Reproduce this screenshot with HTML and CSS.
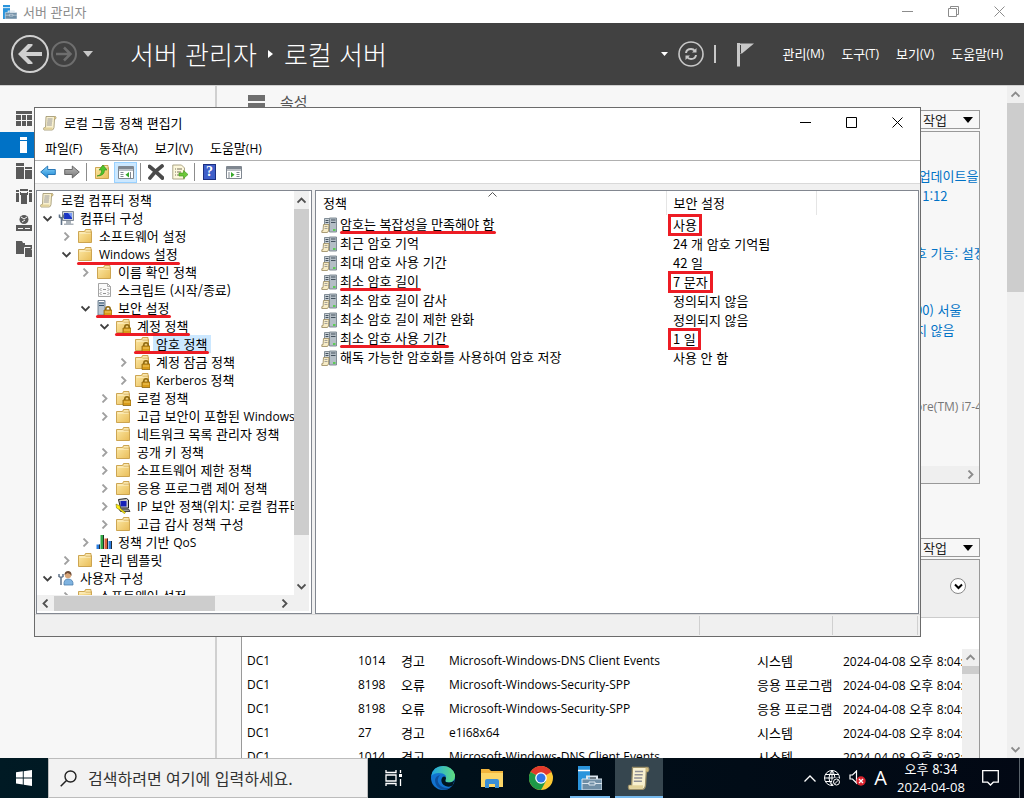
FILE: index.html
```
<!DOCTYPE html>
<html lang="ko">
<head>
    <meta charset="UTF-8">
    <meta name="viewport" content="width=device-width, initial-scale=1.0">
    <title>서버 관리자</title>
    <link rel="stylesheet" href="styles.css">
</head>
<body>
    <!-- Shared icons -->
    <svg class="sprite" aria-hidden="true">
        <defs>
            <linearGradient id="gFolder" x1="0" y1="0" x2="1" y2="1"><stop offset="0" stop-color="#fdeaa8"/><stop offset="1" stop-color="#e9bd58"/></linearGradient>
            <linearGradient id="gBlue" x1="0" y1="0" x2="0" y2="1"><stop offset="0" stop-color="#8fd6fb"/><stop offset="1" stop-color="#1583d2"/></linearGradient>
            <linearGradient id="gGrey" x1="0" y1="0" x2="0" y2="1"><stop offset="0" stop-color="#bbb"/><stop offset="1" stop-color="#777"/></linearGradient>
            <linearGradient id="gEdge" x1="0" y1="0" x2="1" y2="0"><stop offset="0" stop-color="#1fa5e4"/><stop offset="1" stop-color="#5fdc7e"/></linearGradient>
            <symbol id="chev-right" viewBox="0 0 9 9"><path d="M2.5 0.5l4 4-4 4" fill="none" stroke="currentColor" stroke-width="1.8"/></symbol>
            <symbol id="chev-left" viewBox="0 0 9 9"><path d="M6.5 0.5l-4 4 4 4" fill="none" stroke="currentColor" stroke-width="1.8"/></symbol>
            <symbol id="chev-down" viewBox="0 0 9 9"><path d="M0.5 2.5l4 4 4-4" fill="none" stroke="currentColor" stroke-width="1.8"/></symbol>
            <symbol id="chev-up" viewBox="0 0 9 9"><path d="M0.5 6.5l4-4 4 4" fill="none" stroke="currentColor" stroke-width="1.8"/></symbol>
            <symbol id="scroll" viewBox="0 0 16 16">
                <path d="M4 1.5h9.500q1 1 0 2.500h-1l-.5 8.500H12q-.5 2.500-2 2.500H2Q1 13.500 2 12.500H3.500z" fill="#f8f0cf" stroke="#9b8f68" stroke-width=".8"/>
                <path d="M12 1.500q2.500 0 1.500 2.500h-1.500z" fill="#cdb97d"/><path d="M2 12.500h8.500v2H2z" fill="#e2d29a"/>
                <path d="M5.500 4h5M5.300 6h5M5 8h5M4.800 10h5" stroke="#8f8f96" stroke-width=".9"/>
            </symbol>
            <symbol id="folder" viewBox="0 0 16 16">
                <path d="M1.500 3.500h6l1-2h5.500v2h.5v11h-13z" fill="url(#gFolder)" stroke="#c79d45" stroke-width=".9"/>
                <path d="M9 3h4.500M2.500 5h11" stroke="#fff8dc" stroke-width=".9"/><path d="M8.500 4.200h5.500" stroke="#c79d45" stroke-width=".6"/>
            </symbol>
            <symbol id="lock" viewBox="0 0 16 16">
                <path d="M9.800 11V9q0-2.300 2.200-2.300t2.200 2.300v2" fill="none" stroke="#8f6a12" stroke-width="1.600"/>
                <path d="M8 10h8v5.500H8z" fill="#d99c1a" stroke="#8a6410" stroke-width=".8"/><path d="M9 12h6" stroke="#f7d978" stroke-width=".8"/>
            </symbol>
            <symbol id="folder-lock" viewBox="0 0 16 16"><use href="#folder"/><use href="#lock"/></symbol>
            <symbol id="server-lock" viewBox="0 0 16 16">
                <path d="M2 .5h7v14.500H2z" fill="#b9c6d2" stroke="#68798a" stroke-width=".9"/><path d="M3 3h5M3 5.500h5" stroke="#33526e"/><path d="M3 1.500h5" stroke="#fff"/>
                <use href="#lock"/>
            </symbol>
            <symbol id="computer" viewBox="0 0 16 16">
                <path d="M4.500 1.500h11v9h-11z" fill="#cdd3da" stroke="#76808b" stroke-width=".9"/><path d="M6 3h8v6H6z" fill="#1a35c5"/><path d="M10 3h4v5z" fill="#7b9cf5"/>
                <path d="M8 11h5v2.500h2.500v1.500H6v-1.500h2z" fill="#aab2ba"/>
                <path d="M1.500 4.500v2.500q2 1.500 4 0V4.500M3.500 7.500V15" fill="none" stroke="#5f7288" stroke-width="1.600"/>
            </symbol>
            <symbol id="user" viewBox="0 0 16 16">
                <path d="M6 15q-.5-6 4-6 5.500 0 5 6z" fill="#7fb3e0" stroke="#4a7dae" stroke-width=".8"/><circle cx="10" cy="5" r="3.200" fill="#d9a679"/>
                <path d="M6.500 5q0-4 4-4 3.500.5 3 5-1-2.500-4-3z" fill="#6b4a35"/>
                <path d="M1 4v2.500q2 1.500 4 0V4M3 7v8" fill="none" stroke="#5f7288" stroke-width="1.500"/>
            </symbol>
            <symbol id="script" viewBox="0 0 16 16">
                <path d="M2.500 1.500h9l3 3v10h-12z" fill="#fafafa" stroke="#9a9a9a" stroke-width=".9"/><path d="M11.500 1.500v3h3" fill="none" stroke="#9a9a9a" stroke-width=".8"/>
                <path d="M5.500 6L4 7.500 5.500 9M7 7.500h3M11.500 6L13 7.500 11.500 9M5.500 10L4 11.500 5.500 13M7 11.500h3M11.500 10l1.500 1.500-1.500 1.500" fill="none" stroke="#777" stroke-width=".8"/>
            </symbol>
            <symbol id="ipsec" viewBox="0 0 16 16">
                <path d="M3.500 1.500l8-1 2 1.500v8h-8z" fill="#c9c9c9" stroke="#222"/><path d="M5.500 3h6v5.500h-6z" fill="#1420b8"/>
                <path d="M4 11h9.500l1.500 2.500H5.500z" fill="#9a9a9a" stroke="#222" stroke-width=".8"/>
                <path d="M1 6l4 2 .5 2.500 5 4-1 1.200-5-4L1.500 10z" fill="#ffee10" stroke="#6f6600" stroke-width=".5"/>
            </symbol>
            <symbol id="bars" viewBox="0 0 16 16">
                <path d="M.5 10.500h3.500V15H.5z" fill="#2a7de0"/><path d="M4.500 1H8v14H4.500z" fill="#2fa844"/><path d="M8.500 4.500H12V15H8.500z" fill="#e0603a"/><path d="M12.500 7H16v8h-3.500z" fill="#2a7de0"/>
                <path d="M3.500 10.500V15M7.500 1v14M11.500 4.500V15M15.500 7v8" stroke="#222" stroke-width=".9"/>
            </symbol>
            <symbol id="policy" viewBox="0 0 16 16">
                <path d="M8.500 1h7v14h-7z" fill="#b4bec6" stroke="#77838d" stroke-width=".9"/><path d="M3.500 1.500h5v10h-5z" fill="#c9d1d7" stroke="#77838d" stroke-width=".9"/>
                <path d="M4.500 3.500h3M4.500 5.500h3M10 3h4.500M10 5.500h4.500" stroke="#44525e"/>
                <path d="M2.500 7.500h5.500l-.5 6.500q-.5 1.500-1.500 1.500H.8v-1.800h1.200z" fill="#f7ecc6" stroke="#97865b" stroke-width=".8"/><path d="M3.500 9.500h3M3.500 11.500h3" stroke="#8f8f8f" stroke-width=".8"/>
                <path d="M12 13h2.500" stroke="#3ed030" stroke-width="1.500"/>
            </symbol>
            <symbol id="toolbox-server" viewBox="0 0 24 24">
                <path d="M0 0h12v24H0z" fill="#2a94dc"/><path d="M0 4.500h12" stroke="#fff" stroke-width="1.500"/>
                <path d="M4 13h20v11H4z" fill="#6f8ea5" stroke="#dce6ee"/><path d="M9 13v-2.500h10V13" fill="none" stroke="#dce6ee" stroke-width="2"/><path d="M4 17.500h7M17 17.500h7M11 16v3h6v-3z" fill="#6f8ea5" stroke="#dce6ee"/>
            </symbol>
        </defs>
    </svg>

    <main class="server-manager">
        <header class="app-title">
            <svg class="icon" viewBox="0 0 24 24"><use href="#toolbox-server"/></svg>
            <span>서버 관리자</span>
            <div class="window-buttons muted">
                <button aria-label="최소화"><svg viewBox="0 0 11 11"><path d="M0 5.500h11"/></svg></button>
                <button aria-label="이전 크기로"><svg viewBox="0 0 11 11"><path d="M.5 2.500h8v8h-8zM2.500 2.500v-2h8v8h-2"/></svg></button>
                <button aria-label="닫기"><svg viewBox="0 0 11 11"><path d="M.5.5l10 10M10.500.5l-10 10"/></svg></button>
            </div>
        </header>

        <nav class="banner">
            <button class="nav-back" aria-label="뒤로"><svg width="38" height="38" viewBox="0 0 38 38"><circle cx="19" cy="19" r="18" fill="none" stroke="#d0d0d0" stroke-width="2"/><path d="M31 17v4H15l6.500 6.500V29h-4.500L7 19 17 9h4.500v1.500L15 17z" fill="#d0d0d0"/></svg></button>
            <button class="nav-forward" aria-label="앞으로"><svg width="26" height="26" viewBox="0 0 26 26"><circle cx="13" cy="13" r="12" fill="none" stroke="#6e6e6e" stroke-width="2"/><path d="M5 13h15M13 6.500l6.500 6.500-6.500 6.500" fill="none" stroke="#6e6e6e" stroke-width="2.500"/></svg></button>
            <svg class="nav-caret" width="10" height="6" viewBox="0 0 10 6"><path d="M0 0h10L5 6z" fill="#c8c8c8"/></svg>
            <h1>서버 관리자 <svg width="5" height="8" viewBox="0 0 5 8"><path d="M0 0l5 4-5 4z" fill="#fff"/></svg> 로컬 서버</h1>
            <div class="banner-tools">
                <svg width="7" height="4" viewBox="0 0 7 4"><path d="M0 0h7L3.500 4z" fill="#fff"/></svg>
                <button aria-label="새로 고침"><svg width="26" height="26" viewBox="0 0 26 26"><circle cx="13" cy="13" r="12" fill="none" stroke="#c8c8c8" stroke-width="1.600"/><path d="M8 12q.5-4 5-4 2.500 0 4 2M18 14q-.5 4-5 4-2.500 0-4-2" fill="none" stroke="#c8c8c8" stroke-width="2"/><path d="M18.500 7v4.500H14zM7.500 19v-4.500H12z" fill="#c8c8c8"/></svg></button>
                <span class="divider"></span>
                <button aria-label="알림"><svg width="18" height="25" viewBox="0 0 18 25"><path d="M1 1h3v23.500H1zM4 1.500h14L6 11.500H4z" fill="#c8c8c8"/><path d="M4.500 3v8" stroke="#414141"/></svg></button>
            </div>
            <div class="banner-menu">
                <button>관리<span class="latin">(M)</span></button>
                <button>도구<span class="latin">(T)</span></button>
                <button>보기<span class="latin">(V)</span></button>
                <button>도움말<span class="latin">(H)</span></button>
            </div>
        </nav>

        <div class="workspace">
            <aside class="sidebar">
                <a href="#" aria-label="대시보드"><svg class="icon" viewBox="0 0 16 16"><path d="M0 0h16v3H0zM0 4h5v5H0zM6 4h4v5H6zM11 4h5v5h-5zM0 10h5v5H0zM6 10h4v5H6zM11 10h5v5h-5z"/></svg></a>
                <a href="#" class="selected" aria-label="로컬 서버"><svg class="icon" viewBox="0 0 16 16"><path d="M4 0h7v3H4zM4 4h7v12H4z"/></svg></a>
                <a href="#" aria-label="모든 서버"><svg class="icon" viewBox="0 0 16 16"><path d="M0 0h8v3H0zM0 4h8v12H0zM9 4h7v2H9zM9 7h7v9H9z"/></svg></a>
                <a href="#" aria-label="서버 그룹"><svg class="icon" viewBox="0 0 16 16"><path d="M0 1h3v2H0zM0 4h3v9H0zM13 1h3v2h-3zM13 4h3v9h-3zM4 0h8v2H4zM5 4h6v11H5zM4 3h1v3H4zM11 3h1v3h-1z"/></svg></a>
                <a href="#" aria-label="파일 및 저장소"><svg class="icon" viewBox="0 0 16 16"><circle cx="8" cy="4.500" r="4.500"/><path d="M0 10h16v6H0z"/><path d="M2 13.500h5M9 13.500h5M5 2l3 2 3-2M6 7l3-2" stroke="#f7f7f7" fill="none"/></svg></a>
                <a href="#" aria-label="공유 폴더"><svg class="icon" viewBox="0 0 16 16"><path d="M0 0h6l1 2h2v11H0zM9 4h7v4H9zM9 7h5l2 2v7H9z"/><path d="M8.500 16V6.500h6" stroke="#f7f7f7" fill="none"/></svg></a>
            </aside>

            <div class="content">
                <section class="tile">
                    <h2><svg width="17" height="14" viewBox="0 0 17 14"><path d="M0 0h17v6H0zM0 8h17v6H0z" fill="#6e6e6e"/></svg>속성</h2>
                    <div class="tile-tools"><button class="tasks">작업 <svg width="10" height="6" viewBox="0 0 10 6"><path d="M0 0h10L5 6z"/></svg></button></div>
                    <div class="properties">
                        <div class="values">
                            <p><a href="#"> 업데이트을 </a><a href="#">  1:12</a></p>
                            <p><a href="#">호 기능: 설정</a></p>
                            <p><a href="#">00) 서울</a><a href="#">지 않음</a></p>
                            <p class="plain latin">ore(TM) i7-4790</p>
                        </div>
                        <div class="strip"><svg class="arrow" viewBox="0 0 9 9"><use href="#chev-right"/></svg></div>
                    </div>
                </section>

                <section class="tile events-tile">
                    <div class="tile-tools"><button class="tasks">작업 <svg width="10" height="6" viewBox="0 0 10 6"><path d="M0 0h10L5 6z"/></svg></button></div>
                    <div class="events">
                        <div class="filter"><button aria-label="확장"><svg class="arrow" viewBox="0 0 9 9"><path d="M1 2.500l3.500 3.500 3.500-3.500" fill="none" stroke="#000" stroke-width="2"/></svg></button></div>
                        <div class="events-body">
                            <div class="events-clip">
                                <table>
                                    <colgroup><col class="c-server"><col class="c-id"><col class="c-level"><col><col class="c-log"><col class="c-date"></colgroup>
                                    <tr><td class="latin">DC1</td><td class="latin">1014</td><td>경고</td><td class="latin">Microsoft-Windows-DNS Client Events</td><td>시스템</td><td><span class="latin">2024-04-08</span> 오후 <span class="latin">8:04:15</span></td></tr>
                                    <tr><td class="latin">DC1</td><td class="latin">8198</td><td>오류</td><td class="latin">Microsoft-Windows-Security-SPP</td><td>응용 프로그램</td><td><span class="latin">2024-04-08</span> 오후 <span class="latin">8:04:12</span></td></tr>
                                    <tr><td class="latin">DC1</td><td class="latin">8198</td><td>오류</td><td class="latin">Microsoft-Windows-Security-SPP</td><td>응용 프로그램</td><td><span class="latin">2024-04-08</span> 오후 <span class="latin">8:04:12</span></td></tr>
                                    <tr><td class="latin">DC1</td><td class="latin">27</td><td>경고</td><td class="latin">e1i68x64</td><td>시스템</td><td><span class="latin">2024-04-08</span> 오후 <span class="latin">8:04:02</span></td></tr>
                                    <tr><td class="latin">DC1</td><td class="latin">1014</td><td>경고</td><td class="latin">Microsoft-Windows-DNS Client Events</td><td>시스템</td><td><span class="latin">2024-04-08</span> 오후 <span class="latin">8:03:41</span></td></tr>
                                </table>
                            </div>
                            <div class="events-scroll"><svg class="arrow" viewBox="0 0 9 9"><use href="#chev-up"/></svg><div class="thumb"></div></div>
                        </div>
                    </div>
                </section>
            </div>

            <div class="page-scroll">
                <svg class="arrow" viewBox="0 0 9 9"><use href="#chev-up"/></svg>
                <div class="thumb"></div>
                <svg class="arrow" viewBox="0 0 9 9"><use href="#chev-down"/></svg>
            </div>
        </div>
    </main>

    <!-- Group policy editor window -->
    <div class="dialog" role="dialog" aria-label="로컬 그룹 정책 편집기">
        <header class="dialog-title">
            <svg class="icon" viewBox="0 0 16 16"><use href="#scroll"/></svg>
            <span>로컬 그룹 정책 편집기</span>
            <div class="window-buttons">
                <button aria-label="최소화"><svg viewBox="0 0 11 11"><path d="M0 5.500h11"/></svg></button>
                <button aria-label="최대화"><svg viewBox="0 0 11 11"><path d="M.5.5h10v10H.5z"/></svg></button>
                <button aria-label="닫기"><svg viewBox="0 0 11 11"><path d="M.5.5l10 10M10.500.5l-10 10"/></svg></button>
            </div>
        </header>
        <div class="menubar">
            <button>파일<span class="latin">(F)</span></button>
            <button>동작<span class="latin">(A)</span></button>
            <button>보기<span class="latin">(V)</span></button>
            <button>도움말<span class="latin">(H)</span></button>
        </div>
        <div class="toolbar">
            <button aria-label="뒤로"><svg class="icon" viewBox="0 0 16 16"><path d="M.7 8l7-6v3.500h7.600v5H7.700V14z" fill="url(#gBlue)" stroke="#1a6db0" stroke-width=".9"/></svg></button>
            <button aria-label="앞으로"><svg class="icon" viewBox="0 0 16 16"><path d="M15.300 8l-7-6v3.500H.7v5h7.600V14z" fill="url(#gGrey)" stroke="#5c5c5c" stroke-width=".9"/></svg></button>
            <span class="sep"></span>
            <button aria-label="위로"><svg class="icon" viewBox="0 0 16 16"><use href="#folder"/><path d="M3 12q5-1 4.500-6H5l4-5 4 5h-2.500q0 6-7.500 6z" fill="#4fc32c" stroke="#2e8a14" stroke-width=".6"/></svg></button>
            <button class="on" aria-label="콘솔 트리 표시"><svg class="icon" viewBox="0 0 16 16"><path d="M.5 2.500h15v12H.5z" fill="#fff" stroke="#7f8790"/><path d="M1 3h14v2.500H1z" fill="#7f8790"/><path d="M1 6.500h14" stroke="#b9bec4"/><path d="M2.500 8.500h3M2.500 10.500h3M2.500 12.500h3M12.500 8v6" stroke="#7f8790"/><path d="M11 8v5.500L7.500 10.800z" fill="#36a82a"/></svg></button>
            <span class="sep"></span>
            <button aria-label="삭제"><svg class="icon" viewBox="0 0 16 16"><path d="M1.500 2.500Q6 6 14.500 14M14 2Q7 7 2 14" fill="none" stroke="#4a4a4a" stroke-width="3.800" stroke-linecap="round"/></svg></button>
            <button aria-label="목록 내보내기"><svg class="icon" viewBox="0 0 16 16"><path d="M.8 1h8.700l3 3v11H.8z" fill="#fdf8dc" stroke="#a39c7c" stroke-width=".9"/><path d="M3 5h1M5 5h5M3 8h1M5 8h4M3 11h1M5 11h3" stroke="#77705a"/><path d="M7 9h4.500V6.500L16 10.500l-4.500 4V12H7z" fill="#6cc83a" stroke="#3c9117" stroke-width=".6"/></svg></button>
            <span class="sep"></span>
            <button class="help" aria-label="도움말"><span>?</span></button>
            <button aria-label="작업 창 표시"><svg class="icon" viewBox="0 0 16 16"><path d="M.5 2.500h15v12H.5z" fill="#fff" stroke="#7f8790"/><path d="M1 3h14v2.500H1z" fill="#7f8790"/><path d="M1 6.500h14" stroke="#b9bec4"/><path d="M10.500 8.500h3M10.500 10.500h3M10.500 12.500h3M3 8v6" stroke="#7f8790"/><path d="M5 8v5.500L8.500 10.800z" fill="#36a82a"/></svg></button>
        </div>

        <div class="panes">
            <div class="tree-pane">
                <div class="tree">
                    <div class="node root"><svg class="icon"><use href="#scroll"/></svg>로컬 컴퓨터 정책</div>
                    <ul>
                        <li><div class="node"><svg class="twist open"><use href="#chev-down"/></svg><svg class="icon"><use href="#computer"/></svg>컴퓨터 구성</div>
                            <ul>
                                <li><div class="node"><svg class="twist"><use href="#chev-right"/></svg><svg class="icon"><use href="#folder"/></svg>소프트웨어 설정</div></li>
                                <li><div class="node"><svg class="twist open"><use href="#chev-down"/></svg><svg class="icon"><use href="#folder"/></svg><span class="marked"><span class="latin">Windows</span> 설정</span></div>
                                    <ul>
                                        <li><div class="node"><svg class="twist"><use href="#chev-right"/></svg><svg class="icon"><use href="#folder"/></svg>이름 확인 정책</div></li>
                                        <li><div class="node"><span class="twist"></span><svg class="icon"><use href="#script"/></svg>스크립트 (시작/종료)</div></li>
                                        <li><div class="node"><svg class="twist open"><use href="#chev-down"/></svg><svg class="icon"><use href="#server-lock"/></svg><span class="marked">보안 설정</span></div>
                                            <ul>
                                                <li><div class="node"><svg class="twist open"><use href="#chev-down"/></svg><svg class="icon"><use href="#folder-lock"/></svg><span class="marked">계정 정책</span></div>
                                                    <ul>
                                                        <li><div class="node"><span class="twist"></span><svg class="icon"><use href="#folder-lock"/></svg><span class="marked current">암호 정책</span></div></li>
                                                        <li><div class="node"><svg class="twist"><use href="#chev-right"/></svg><svg class="icon"><use href="#folder-lock"/></svg>계정 잠금 정책</div></li>
                                                        <li><div class="node"><svg class="twist"><use href="#chev-right"/></svg><svg class="icon"><use href="#folder-lock"/></svg><span><span class="latin">Kerberos</span> 정책</span></div></li>
                                                    </ul>
                                                </li>
                                                <li><div class="node"><svg class="twist"><use href="#chev-right"/></svg><svg class="icon"><use href="#folder-lock"/></svg>로컬 정책</div></li>
                                                <li><div class="node"><svg class="twist"><use href="#chev-right"/></svg><svg class="icon"><use href="#folder"/></svg><span>고급 보안이 포함된 <span class="latin">Windows Defender</span> 방화벽</span></div></li>
                                                <li><div class="node"><span class="twist"></span><svg class="icon"><use href="#folder"/></svg>네트워크 목록 관리자 정책</div></li>
                                                <li><div class="node"><svg class="twist"><use href="#chev-right"/></svg><svg class="icon"><use href="#folder"/></svg>공개 키 정책</div></li>
                                                <li><div class="node"><svg class="twist"><use href="#chev-right"/></svg><svg class="icon"><use href="#folder"/></svg>소프트웨어 제한 정책</div></li>
                                                <li><div class="node"><svg class="twist"><use href="#chev-right"/></svg><svg class="icon"><use href="#folder"/></svg>응용 프로그램 제어 정책</div></li>
                                                <li><div class="node"><svg class="twist"><use href="#chev-right"/></svg><svg class="icon"><use href="#ipsec"/></svg><span><span class="latin">IP</span> 보안 정책(위치: 로컬 컴퓨터)</span></div></li>
                                                <li><div class="node"><svg class="twist"><use href="#chev-right"/></svg><svg class="icon"><use href="#folder"/></svg>고급 감사 정책 구성</div></li>
                                            </ul>
                                        </li>
                                        <li><div class="node"><svg class="twist"><use href="#chev-right"/></svg><svg class="icon"><use href="#bars"/></svg><span>정책 기반 <span class="latin">QoS</span></span></div></li>
                                    </ul>
                                </li>
                                <li><div class="node"><svg class="twist"><use href="#chev-right"/></svg><svg class="icon"><use href="#folder"/></svg>관리 템플릿</div></li>
                            </ul>
                        </li>
                        <li><div class="node"><svg class="twist open"><use href="#chev-down"/></svg><svg class="icon"><use href="#user"/></svg>사용자 구성</div>
                            <ul>
                                <li><div class="node"><svg class="twist"><use href="#chev-right"/></svg><svg class="icon"><use href="#folder"/></svg>소프트웨어 설정</div></li>
                            </ul>
                        </li>
                    </ul>
                </div>
                <div class="vbar"><svg class="arrow"><use href="#chev-up"/></svg><div class="thumb"></div><svg class="arrow"><use href="#chev-down"/></svg></div>
                <div class="hbar"><svg class="arrow"><use href="#chev-left"/></svg><div class="thumb"></div><svg class="arrow"><use href="#chev-right"/></svg></div>
            </div>

            <div class="list-pane">
                <svg class="sort" viewBox="0 0 9 5"><path d="M.5 4.500l4-4 4 4" fill="none" stroke="#555"/></svg>
                <table class="policies">
                    <thead><tr><th>정책</th><th>보안 설정</th><th></th></tr></thead>
                    <tbody>
                        <tr><td><svg class="icon"><use href="#policy"/></svg><span class="marked">암호는 복잡성을 만족해야 함</span></td><td><span class="boxed">사용</span></td></tr>
                        <tr><td><svg class="icon"><use href="#policy"/></svg>최근 암호 기억</td><td>24 개 암호 기억됨</td></tr>
                        <tr><td><svg class="icon"><use href="#policy"/></svg>최대 암호 사용 기간</td><td>42 일</td></tr>
                        <tr><td><svg class="icon"><use href="#policy"/></svg><span class="marked">최소 암호 길이</span></td><td><span class="boxed">7 문자</span></td></tr>
                        <tr><td><svg class="icon"><use href="#policy"/></svg>최소 암호 길이 감사</td><td>정의되지 않음</td></tr>
                        <tr><td><svg class="icon"><use href="#policy"/></svg>최소 암호 길이 제한 완화</td><td>정의되지 않음</td></tr>
                        <tr><td><svg class="icon"><use href="#policy"/></svg><span class="marked">최소 암호 사용 기간</span></td><td><span class="boxed">1 일</span></td></tr>
                        <tr><td><svg class="icon"><use href="#policy"/></svg>해독 가능한 암호화를 사용하여 암호 저장</td><td>사용 안 함</td></tr>
                    </tbody>
                </table>
            </div>
        </div>
        <footer class="statusbar"><span></span><span></span><span></span></footer>
    </div>

    <div class="taskbar">
        <button class="start" aria-label="시작"><svg width="16" height="16" viewBox="0 0 16 16"><path d="M0 2.300l6.800-1v6.200H0zM7.700 1.200L16 0v7.500H7.700zM0 8.400h6.800v6.200l-6.800-1zM7.700 8.400H16V16l-8.300-1.200z" fill="#fff"/></svg></button>
        <div class="search">
            <svg width="17" height="17" viewBox="0 0 17 17"><circle cx="10.500" cy="6.500" r="5.500" fill="none" stroke="#222" stroke-width="1.400"/><path d="M6.500 10.500L.7 16.300" stroke="#222" stroke-width="1.500"/></svg>
            <input type="text" aria-label="검색" placeholder="검색하려면 여기에 입력하세요.">
        </div>
        <div class="apps">
            <button aria-label="작업 보기"><svg width="18" height="16" viewBox="0 0 18 16"><path d="M1 0v2.500h10V0M1 16v-2.500h10V16M1 5h10v6H1zM15.500 0v3M15.500 9v7" fill="none" stroke="#fff" stroke-width="1.300"/><path d="M14 4h3v3h-3z" fill="#fff"/></svg></button>
            <button aria-label="Edge"><svg width="24" height="24" viewBox="0 0 24 24"><circle cx="12" cy="12" r="12" fill="#1273cf"/><path d="M.3 10Q2 0 12 0q9 0 12 8.500Q24.500 16 18 16.500q-4.500 0-3.500-2.500 2-5-3-6.500Q4 6 .3 10z" fill="url(#gEdge)"/><path d="M9 9q-4 4-1 9 4 5.500 12 3.500Q16 24.500 11 23.500 4 21 4 14q.5-4 5-5z" fill="#0c4f9c"/><path d="M14.500 14q-1 2.500 3.500 2.500 4 0 6-3l-2.500 6q-3 2-7 .5-5-2.500-4-7 1.500-3.500 4-2 1 1 0 3z" fill="#001520"/></svg></button>
            <button aria-label="파일 탐색기"><svg width="22" height="19" viewBox="0 0 22 19"><path d="M0 0h8l2 2h12v16H0z" fill="#f2b53c"/><path d="M0 4h22v14H0z" fill="#fcd667"/><path d="M4 19v-7q0-2 2-2h10q2 0 2 2v7h-4v-4H8v4z" fill="#3a8fd6"/></svg></button>
            <button aria-label="Chrome"><svg width="24" height="24" viewBox="0 0 24 24"><circle cx="12" cy="12" r="12" fill="#fcc934"/><path d="M12 12L1.600 6A12 12 0 0 1 22.400 6z" fill="#e2392c"/><path d="M12 12L1.600 6A12 12 0 0 0 12 24l5-9z" fill="#1e9847"/><circle cx="12" cy="12" r="5.800" fill="#fff"/><circle cx="12" cy="12" r="4.500" fill="#2f75e8"/></svg></button>
            <button class="running" aria-label="서버 관리자"><svg width="24" height="24" viewBox="0 0 24 24"><use href="#toolbox-server"/></svg></button>
            <button class="running active" aria-label="로컬 그룹 정책 편집기"><svg width="26" height="26" viewBox="0 0 16 16"><use href="#scroll"/></svg></button>
        </div>
        <div class="tray">
            <svg width="12" height="7" viewBox="0 0 12 7"><path d="M.5 6.500L6 1l5.500 5.500" fill="none" stroke="#fff" stroke-width="1.300"/></svg>
            <svg width="17" height="16" viewBox="0 0 17 16"><g fill="none" stroke="#fff"><circle cx="8" cy="8" r="7.500"/><path d="M8 .5v15M.5 8h15M1.500 4.500h13M1.500 11.500h9M8 .5Q2 8 8 15.500M8 .5Q14 8 8 15.500"/></g><circle cx="12.500" cy="12" r="4.500" fill="#020a14"/><circle cx="12.500" cy="12" r="3" fill="none" stroke="#fff"/><path d="M10.500 14l4-4" stroke="#fff"/></svg>
            <svg width="17" height="16" viewBox="0 0 17 16"><path d="M1 5h2.500l4-4v12l-4-4H1z" fill="none" stroke="#fff" stroke-width="1.200"/><circle cx="12" cy="11" r="4.700" fill="#d9232e"/><path d="M10 9l4 4M14 9l-4 4" stroke="#fff" stroke-width="1.300"/></svg>
            <span class="ime">A</span>
            <div class="clock"><span>오후 8:34</span><span class="latin">2024-04-08</span></div>
            <svg class="notice" width="17" height="16" viewBox="0 0 17 16"><path d="M.7.7h15.600v11.500h-5L8.500 15l-2.800-2.800h-5z" fill="none" stroke="#fff" stroke-width="1.300"/></svg>
        </div>
    </div>
</body>
</html>
```
FILE: styles.css
```
* {
    box-sizing: border-box;
}
body {
    margin: 0;
    height: 100vh;
    display: flex;
    flex-direction: column;
    overflow: hidden;
    font-family: "Noto Sans CJK KR", sans-serif;
    font-size: 13px;
    line-height: 18px;
    color: #000;
    background-color: #f7f7f7;
}
button {
    padding: 0;
    border: none;
    background: none;
    font: inherit;
    color: inherit;
    cursor: pointer;
}
a {
    color: #0072c6;
    text-decoration: none;
}
svg {
    flex: none;
}
h1, h2, p, ul {
    margin: 0;
    padding: 0;
    font-weight: 400;
}
.sprite {
    position: absolute;
    width: 0;
    height: 0;
}
.icon {
    width: 16px;
    height: 16px;
}
.arrow {
    width: 9px;
    height: 9px;
    color: #8a8a8a;
}
.latin {
    font-family: "Open Sans", "Noto Sans CJK KR", sans-serif;
    font-size: 12px;
}

/* Server manager */
.server-manager {
    flex: 1;
    min-height: 0;
    display: flex;
    flex-direction: column;
}
.app-title {
    display: flex;
    align-items: center;
    height: 23px;
    padding: 0 2px 0 3px;
    gap: 6px;
    color: #8c8c8c;
    background-color: #fff;
}
.app-title .icon {
    width: 14px;
    height: 14px;
}
.window-buttons {
    display: flex;
    margin-left: auto;
}
.window-buttons button {
    display: flex;
    align-items: center;
    justify-content: center;
    width: 46px;
    height: 22px;
}
.window-buttons svg {
    width: 11px;
    height: 11px;
    fill: none;
    stroke: #000;
}
.window-buttons.muted svg {
    stroke: #8c8c8c;
}
.banner {
    display: flex;
    align-items: center;
    height: 62px;
    padding: 0 21px 0 11px;
    color: #fff;
    background-color: #414141;
}
.banner button {
    display: flex;
}
.nav-forward {
    margin: 0 6px 0 2px;
}
.banner h1 {
    display: flex;
    align-items: center;
    gap: 11px;
    margin-left: 37px;
    font-size: 26px;
    font-weight: 300;
    line-height: 36px;
    white-space: nowrap;
}
.banner-tools {
    display: flex;
    align-items: center;
    gap: 10px;
    margin-left: auto;
}
.banner-tools .divider {
    width: 2px;
    height: 18px;
    margin-right: 10px;
    background-color: #c8c8c8;
}
.banner-menu {
    display: flex;
    gap: 17px;
    margin-left: 29px;
}
.workspace {
    flex: 1;
    min-height: 0;
    display: flex;
    border-top: 1px solid #d0d0d0;
}
.sidebar {
    flex: 0 0 217px;
    padding-top: 20px;
    border-right: 2px solid #d0d0d0;
}
.sidebar a {
    display: flex;
    align-items: center;
    height: 26px;
    padding-left: 16px;
}
.sidebar svg {
    fill: #5a5a5a;
}
.sidebar .selected {
    background-color: #0072c6;
}
.sidebar .selected svg {
    fill: #fff;
}
.content {
    flex: 1;
    min-width: 0;
    display: flex;
    flex-direction: column;
    padding: 8px 27px 0 24px;
}
.tile h2 {
    display: flex;
    align-items: center;
    gap: 15px;
    height: 16px;
    padding-left: 7px;
    font-size: 15px;
    color: #555;
}
.tile-tools {
    display: flex;
    justify-content: flex-end;
    margin-bottom: 2px;
}
.tasks {
    display: flex;
    align-items: center;
    justify-content: space-between;
    width: 72px;
    height: 19px;
    padding: 0 6px 0 14px;
    border: 1px solid #999;
    color: #222;
}
.properties {
    display: flex;
    flex-direction: column;
    justify-content: space-between;
    height: 353px;
    border: 1px solid #999;
    overflow: hidden;
}
.values {
    display: flex;
    flex-direction: column;
    gap: 37px;
    width: 64px;
    margin: 34px 0 0 auto;
    line-height: 20px;
    white-space: pre;
}
.values a {
    display: block;
}
.values .plain {
    padding-top: 20px;
    color: #777;
}
.strip {
    display: flex;
    align-items: center;
    justify-content: flex-end;
    height: 17px;
    padding-right: 4px;
    background-color: #efefef;
}
.events-tile {
    flex: 1;
    min-height: 0;
    display: flex;
    flex-direction: column;
    margin-top: 54px;
}
.events {
    flex: 1;
    min-height: 0;
    display: flex;
    flex-direction: column;
    border: 1px solid #999;
    border-bottom: none;
    background-color: #fff;
}
.filter {
    flex: none;
    display: flex;
    justify-content: flex-end;
    height: 58px;
    padding: 18px 13px 0 0;
    border-bottom: 1px solid #ccc;
    background-color: #efefef;
}
.filter button {
    display: flex;
    align-items: center;
    justify-content: center;
    width: 16px;
    height: 16px;
    border: 1px solid #888;
    border-radius: 50%;
    background-color: #fff;
}
.events-body {
    flex: 1;
    min-height: 0;
    display: flex;
    padding-top: 31px;
}
.events-clip {
    flex: 1;
    min-width: 0;
    overflow: hidden;
}
.events table {
    width: 100%;
    border-collapse: collapse;
    table-layout: fixed;
}
.events td {
    height: 24px;
    padding: 0 0 0 5px;
    white-space: nowrap;
}
.c-server {
    width: 111px;
}
.c-id {
    width: 43px;
}
.c-level {
    width: 48px;
}
.c-log {
    width: 86px;
}
.c-date {
    width: 124px;
}
.events-scroll {
    display: flex;
    flex-direction: column;
    align-items: center;
    width: 17px;
    padding-top: 4px;
    background-color: #efefef;
}
.events-scroll .thumb {
    width: 17px;
    height: 8px;
    margin-top: 4px;
}
.thumb {
    background-color: #cdcdcd;
}
.page-scroll {
    display: flex;
    flex-direction: column;
    align-items: center;
    width: 17px;
    padding: 4px 0;
    background-color: #efefef;
}
.page-scroll .thumb {
    width: 17px;
    height: 189px;
    margin: 4px 0 auto;
}

/* Policy editor */
.dialog {
    position: absolute;
    top: 107px;
    right: 103px;
    bottom: 161px;
    left: 34px;
    display: flex;
    flex-direction: column;
    border: 1px solid #6b6b6b;
    background-color: #f0f0f0;
}
.dialog-title {
    display: flex;
    align-items: center;
    height: 29px;
    padding-left: 7px;
    gap: 6px;
    background-color: #fff;
}
.menubar {
    display: flex;
    gap: 17px;
    height: 24px;
    padding: 0 10px;
    border-bottom: 1px solid #b0b0b0;
    background-color: #fff;
}
.toolbar {
    display: flex;
    align-items: center;
    gap: 1px;
    height: 23px;
    padding-left: 1px;
    border-bottom: 1px solid #d9d9d9;
    background-color: #fff;
}
.toolbar button {
    display: flex;
    align-items: center;
    justify-content: center;
    width: 23px;
    height: 21px;
}
.toolbar .on {
    border: 1px solid #99d1ff;
    background-color: #cce8ff;
}
.toolbar .sep {
    width: 1px;
    height: 18px;
    margin: 0 2px;
    background-color: #8c8c8c;
}
.help span {
    width: 13px;
    height: 16px;
    border: 1px solid #1c2f80;
    font-family: "Liberation Serif", serif;
    font-size: 14px;
    font-weight: 700;
    line-height: 14px;
    color: #fff;
    background-color: #3f5fc9;
}
.panes {
    flex: 1;
    min-height: 0;
    display: flex;
    gap: 3px;
    padding: 6px 1px 0;
}
.tree-pane {
    flex: none;
    display: grid;
    grid-template-columns: 1fr 15px;
    grid-template-rows: 1fr 16px;
    width: 276px;
    padding-right: 2px;
    padding-bottom: 2px;
    border: 1px solid #828790;
    background-color: #fff;
}
.tree {
    min-height: 0;
    min-width: 0;
    overflow: hidden;
}
.tree ul {
    list-style: none;
}
.tree ul ul {
    margin-left: 19px;
}
.node {
    display: flex;
    align-items: center;
    height: 18px;
    white-space: nowrap;
}
.node .icon {
    margin-right: 6px;
}
.root {
    padding-left: 2px;
}
.twist {
    flex: none;
    width: 9px;
    height: 9px;
    margin: 0 6px;
    color: #a0a0a0;
}
.twist.open {
    color: #404040;
}
.marked {
    position: relative;
}
.marked::after {
    content: "";
    position: absolute;
    right: -2px;
    bottom: -1px;
    left: 0;
    height: 3px;
    border-radius: 2px;
    background-color: #ed1c24;
}
.tree .marked::after {
    left: -22px;
    z-index: 1;
}
.current {
    background-color: #cce8ff;
    box-shadow: -3px 0 #cce8ff, 4px 0 #cce8ff;
}
.vbar, .hbar {
    display: flex;
    align-items: center;
    background-color: #f0f0f0;
}
.vbar {
    flex-direction: column;
    grid-row: span 2;
    padding: 5px 0 20px;
}
.vbar .thumb {
    width: 15px;
    height: 326px;
    margin: 4px 0 auto;
}
.hbar {
    grid-row: 2;
    padding: 0 5px 0 4px;
}
.hbar .thumb {
    width: 161px;
    height: 15px;
    margin: 0 auto 0 4px;
}
.vbar .arrow, .hbar .arrow {
    color: #505050;
}
.list-pane {
    position: relative;
    flex: 1;
    min-width: 0;
    border: 1px solid #828790;
    background-color: #fff;
}
.sort {
    position: absolute;
    top: 1px;
    left: 172px;
    width: 9px;
    height: 5px;
}
.policies {
    width: 100%;
    border-collapse: collapse;
    table-layout: fixed;
}
.policies th {
    width: 150px;
    height: 24px;
    padding: 0 0 0 7px;
    border-right: 1px solid #e5e5e5;
    font-weight: 400;
    text-align: left;
}
.policies th:first-child {
    width: 350px;
}
.policies th:last-child {
    width: auto;
    border-right: none;
}
.policies td {
    height: 19px;
    padding: 0 0 0 7px;
    line-height: 16px;
    white-space: nowrap;
}
.policies td:first-child {
    padding-left: 5px;
}
.policies .icon {
    margin-right: 3px;
    vertical-align: middle;
}
.boxed {
    display: inline-block;
    margin: 0 -2px;
    padding: 0 2px;
    outline: 3px solid #ed1c24;
}
.statusbar {
    display: flex;
    justify-content: flex-end;
    height: 22px;
    padding: 1px 2px 1px 0;
    border-top: 1px solid #d9d9d9;
}
.statusbar span {
    width: 133px;
    border-right: 1px solid #d0d0d0;
}
.statusbar span:last-child {
    width: 85px;
}

/* Taskbar */
.taskbar {
    flex: none;
    display: flex;
    height: 40px;
    color: #fff;
    background: linear-gradient(to right, #001a24, #00101a 45%, #020814);
}
.start {
    display: flex;
    align-items: center;
    justify-content: center;
    width: 48px;
}
.search {
    display: flex;
    align-items: center;
    gap: 11px;
    width: 320px;
    padding-left: 11px;
    border: 1px solid #bcbcbc;
    background-color: #f2f2f2;
}
.search input {
    flex: 1;
    min-width: 0;
    padding: 0;
    border: none;
    outline: none;
    background: none;
    font: inherit;
    font-size: 16px;
}
.search input::placeholder {
    color: #333;
    opacity: 1;
}
.apps {
    display: flex;
    gap: 1px;
    padding-left: 2px;
}
.apps button {
    display: flex;
    align-items: center;
    justify-content: center;
    width: 48px;
    height: 40px;
}
.apps .running {
    width: 40px;
    margin: 0 4px;
    padding-top: 2px;
    border-bottom: 2px solid #76b9ed;
}
.apps .active {
    width: 48px;
    margin: 0;
    background-color: #36464f;
}
.tray {
    display: flex;
    align-items: center;
    gap: 8px;
    margin-left: auto;
    margin-right: 4px;
    padding-right: 20px;
    border-right: 1px solid #5a636b;
}
.ime {
    font-family: "Open Sans", sans-serif;
    font-size: 20px;
}
.clock {
    display: flex;
    flex-direction: column;
    align-items: center;
    width: 72px;
}
.clock .latin {
    font-size: 13px;
}
.notice {
    margin-left: 7px;
}
```
